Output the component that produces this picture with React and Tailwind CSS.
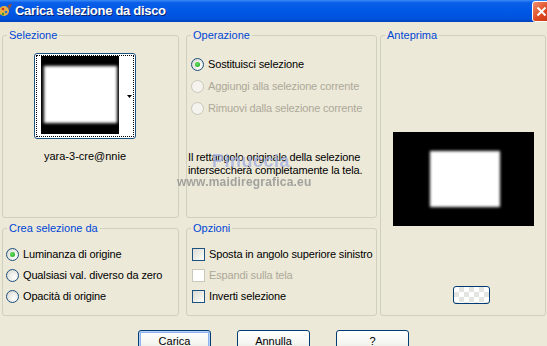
import React from 'react'

const font = { fontFamily: '"Liberation Sans", Arial, sans-serif' }

const Group = ({ title, className = '', children }) => (
  <div className={`border border-[#d0d0bf] rounded-[3px] flex flex-col ${className}`}>
    <div className="-mt-[7px] ml-[4px] w-fit px-[2px] bg-[#ece9d8] text-[#0046d5] text-[11px] leading-[13px] whitespace-nowrap">
      {title}
    </div>
    {children}
  </div>
)

const Radio = ({ checked, disabled, label }) => (
  <div className="flex items-center h-[13px] gap-[4px] whitespace-nowrap">
    <div
      className={`w-[13px] h-[13px] shrink-0 rounded-full border flex items-center justify-center ${
        disabled
          ? 'border-[#cac8bb] bg-[#f4f3ee]'
          : 'border-[#1c5180] bg-[radial-gradient(circle_at_65%_65%,#ffffff_0%,#e6e6e0_60%,#d0d0c8_100%)]'
      }`}>
      {checked && (
        <div className="w-[5px] h-[5px] rounded-full bg-[radial-gradient(circle_at_40%_40%,#5fe35f,#1f9a1f)]" />
      )}
    </div>
    <span className={`text-[11px] leading-[13px] tracking-[-0.15px] ${disabled ? 'text-[#aca899]' : 'text-black'}`}>
      {label}
    </span>
  </div>
)

const Check = ({ disabled, label }) => (
  <div className="flex items-center h-[13px] gap-[4px] whitespace-nowrap">
    <div
      className={`w-[13px] h-[13px] shrink-0 border ${
        disabled
          ? 'border-[#cac8bb] bg-white'
          : 'border-[#1c5180] bg-[linear-gradient(135deg,#dcdcd7_0%,#f0f0ea_60%,#ffffff_100%)]'
      }`}
    />
    <span className={`text-[11px] leading-[13px] tracking-[-0.15px] ${disabled ? 'text-[#aca899]' : 'text-black'}`}>
      {label}
    </span>
  </div>
)

const Button = ({ label, primary, className = '' }) => (
  <div
    className={`h-[23px] border border-[#003c74] rounded-[3px] bg-[linear-gradient(#ffffff,#f4f4f0_60%,#e3e2da)] flex items-center justify-center text-[11px] text-black ${
      primary ? 'shadow-[inset_0_0_0_1px_#b8d0f8,inset_0_0_0_2px_#8fb3ec]' : ''
    } ${className}`}>
    {label}
  </div>
)

export default function App() {
  return (
    <div className="relative w-[547px] h-[346px] overflow-hidden bg-[#ece9d8]" style={font}>
      {/* title bar */}
      <div className="h-[22px] flex items-center bg-[linear-gradient(#3b8cf7_0%,#0a5fe8_12%,#0058e6_50%,#0052dc_85%,#0043b8_100%)]">
        <svg width="13" height="16" viewBox="0 0 13 16">
          <circle cx="4" cy="8" r="5" fill="#e8b040" />
          <circle cx="3" cy="6" r="1.3" fill="#d03020" />
          <circle cx="6" cy="9" r="1.3" fill="#2f70d0" />
          <circle cx="3" cy="11" r="1.2" fill="#30a030" />
          <path d="M8 2 L12 1 L9 7 Z" fill="#a0522d" />
        </svg>
        <span className="ml-[2px] text-white font-bold text-[13px] tracking-[-0.3px] whitespace-nowrap [text-shadow:1px_1px_0_#0a246a]">
          Carica selezione da disco
        </span>
        <div className="ml-auto mr-[-8px] w-[23px] h-[21px] rounded-[3px] border border-white bg-[linear-gradient(135deg,#f09070,#e04a22_50%,#c0300f)] flex items-center justify-start pl-[3px]">
          <svg width="11" height="11" viewBox="0 0 11 11">
            <path d="M1.5 1.5 L9.5 9.5 M9.5 1.5 L1.5 9.5" stroke="white" strokeWidth="2" />
          </svg>
        </div>
      </div>

      {/* body */}
      <div className="flex pt-[13px] pl-[2px]">
        <div className="flex flex-col w-[177px] gap-[10px]">
          <Group title="Selezione" className="h-[183px]">
            <div className="mt-[11px] ml-[31px] w-[102px] flex flex-col items-center">
              <div className="w-[102px] h-[86px] border border-[#1c5180] rounded-[3px] bg-white p-[1px]">
                <div className="h-full border border-dotted border-black flex items-center">
                  <div className="ml-[4px] self-start w-[78px] h-[78px] bg-black overflow-hidden">
                    <div className="mt-[10px] ml-[3px] w-[73px] h-[57px] bg-white blur-[1.5px]" />
                  </div>
                  <svg width="5" height="3" viewBox="0 0 5 3" className="ml-[8px]">
                    <path d="M0 0 H5 L2.5 3 Z" fill="black" />
                  </svg>
                </div>
              </div>
              <div className="mt-[11px] text-[11px] leading-[13px] text-black whitespace-nowrap">yara-3-cre@nnie</div>
            </div>
          </Group>
          <Group title="Crea selezione da" className="h-[88px]">
            <div className="mt-[13px] ml-[3px] flex flex-col gap-[8px]">
              <Radio checked label="Luminanza di origine" />
              <Radio label="Qualsiasi val. diverso da zero" />
              <Radio label="Opacità di origine" />
            </div>
          </Group>
        </div>

        <div className="ml-[7px] flex flex-col w-[191px] gap-[10px]">
          <Group title="Operazione" className="h-[183px]">
            <div className="mt-[16px] ml-[4px] flex flex-col gap-[9px]">
              <Radio checked label="Sostituisci selezione" />
              <Radio disabled label="Aggiungi alla selezione corrente" />
              <Radio disabled label="Rimuovi dalla selezione corrente" />
            </div>
            <div className="mt-[36px] ml-[1px] text-[11px] leading-[13px] tracking-[-0.15px] text-black whitespace-nowrap">
              Il rettangolo originale della selezione
              <br />
              interseccherà completamente la tela.
            </div>
          </Group>
          <Group title="Opzioni" className="h-[88px]">
            <div className="mt-[13px] ml-[5px] flex flex-col gap-[8px]">
              <Check label="Sposta in angolo superiore sinistro" />
              <Check disabled label="Espandi sulla tela" />
              <Check label="Inverti selezione" />
            </div>
          </Group>
        </div>

        <Group title="Anteprima" className="ml-[3px] w-[166px] h-[281px]">
          <div className="mt-[90px] ml-[12px] w-[141px] h-[94px] bg-black overflow-hidden">
            <div className="mt-[19px] ml-[37px] w-[70px] h-[56px] bg-white blur-[1.5px]" />
          </div>
          <div className="mt-[60px] ml-[72px] w-[37px] h-[18px] border border-[#003c74] rounded-[3px] bg-[repeating-conic-gradient(#e4e4e0_0_25%,#ffffff_0_50%)] bg-[length:10px_10px]" />
        </Group>
      </div>

      {/* buttons */}
      <div className="flex pl-[138px] gap-[26px] mt-[14px]">
        <Button primary label="Carica" className="w-[73px]" />
        <Button label="Annulla" className="w-[73px]" />
        <Button label="?" className="w-[73px]" />
      </div>

      {/* watermark */}
      <div className="absolute left-[212px] top-[151px] text-[18px] font-bold text-[#a6b2e0] opacity-80 leading-[20px] tracking-[0.5px]">
        Pinuccia
      </div>
      <div className="absolute left-[177px] top-[175px] text-[12px] font-bold text-[#8a8a8a] opacity-75 leading-[14px] tracking-[0.2px]">
        www.maidiregrafica.eu
      </div>
    </div>
  )
}
